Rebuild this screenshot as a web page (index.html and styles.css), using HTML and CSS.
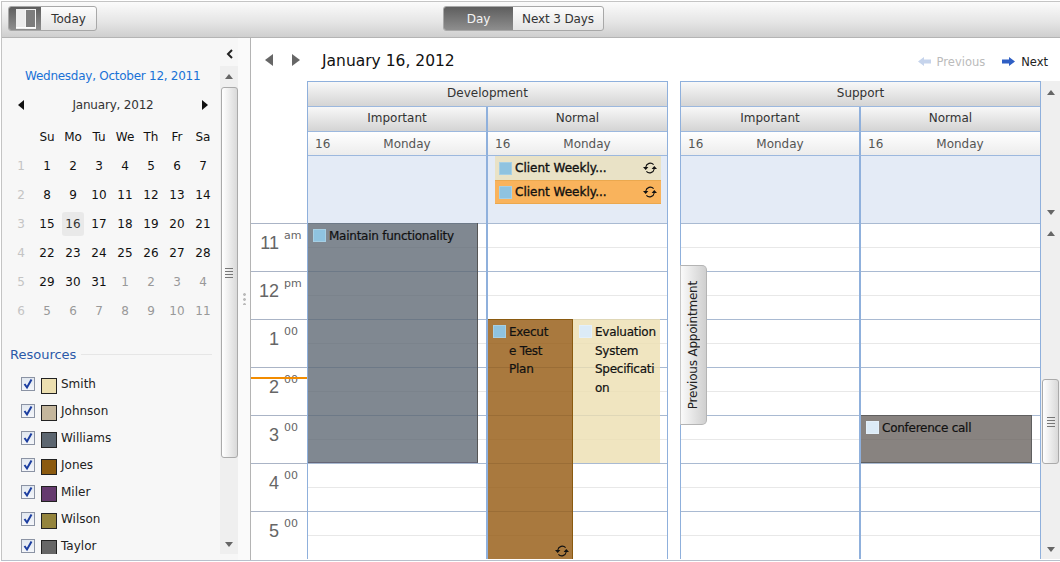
FILE: index.html
```html
<!DOCTYPE html>
<html lang="en">
<head>
<meta charset="utf-8">
<title>Scheduler</title>
<link rel="stylesheet" href="styles.css">
</head>
<body>
<div class="app">
  <header class="toolbar">
    <div class="btn-group">
      <button class="seg seg-active seg-icon" aria-label="Toggle sidebar">
        <svg width="20" height="20" viewBox="0 0 20 20"><rect x="0" y="0" width="10" height="20" fill="#ececec"/><rect x="9.500" y=".5" width="10" height="19" fill="#7d7d7d" stroke="#f4f4f4"/><rect x="0" y="18" width="20" height="1" fill="#fff"/></svg>
      </button>
      <button class="seg seg-today">Today</button>
    </div>
    <div class="btn-group views">
      <button class="seg seg-active seg-day">Day</button>
      <button class="seg seg-next3">Next 3 Days</button>
    </div>
  </header>

  <div class="workspace">
    <aside class="sidebar">
      <div class="side-content">
        <div class="today-link">Wednesday, October 12, 2011</div>
        <div class="month-row">
          <svg class="mini-arrow" width="8" height="12" viewBox="0 0 8 12"><path d="M7 1v10L1 6z" fill="#111"/></svg>
          <span>January, 2012</span>
          <svg class="mini-arrow" width="8" height="12" viewBox="0 0 8 12"><path d="M1 1v10l6-5z" fill="#111"/></svg>
        </div>
        <div class="cal-grid">
          <span></span><span>Su</span><span>Mo</span><span>Tu</span><span>We</span><span>Th</span><span>Fr</span><span>Sa</span>
          <span class="wk">1</span><span>1</span><span>2</span><span>3</span><span>4</span><span>5</span><span>6</span><span>7</span>
          <span class="wk">2</span><span>8</span><span>9</span><span>10</span><span>11</span><span>12</span><span>13</span><span>14</span>
          <span class="wk">3</span><span>15</span><span class="sel">16</span><span>17</span><span>18</span><span>19</span><span>20</span><span>21</span>
          <span class="wk">4</span><span>22</span><span>23</span><span>24</span><span>25</span><span>26</span><span>27</span><span>28</span>
          <span class="wk">5</span><span>29</span><span>30</span><span>31</span><span class="off">1</span><span class="off">2</span><span class="off">3</span><span class="off">4</span>
          <span class="wk">6</span><span class="off">5</span><span class="off">6</span><span class="off">7</span><span class="off">8</span><span class="off">9</span><span class="off">10</span><span class="off">11</span>
        </div>
        <div class="res-title"><span>Resources</span><i></i></div>
        <ul class="res-list">
          <li><span class="check"><svg width="12" height="12" viewBox="0 0 12 12"><use href="#tickmark"/></svg></span><span class="swatch c-smith"></span>Smith</li>
          <li><span class="check"><svg width="12" height="12" viewBox="0 0 12 12"><use href="#tickmark"/></svg></span><span class="swatch c-johnson"></span>Johnson</li>
          <li><span class="check"><svg width="12" height="12" viewBox="0 0 12 12"><use href="#tickmark"/></svg></span><span class="swatch c-williams"></span>Williams</li>
          <li><span class="check"><svg width="12" height="12" viewBox="0 0 12 12"><use href="#tickmark"/></svg></span><span class="swatch c-jones"></span>Jones</li>
          <li><span class="check"><svg width="12" height="12" viewBox="0 0 12 12"><use href="#tickmark"/></svg></span><span class="swatch c-miler"></span>Miler</li>
          <li><span class="check"><svg width="12" height="12" viewBox="0 0 12 12"><use href="#tickmark"/></svg></span><span class="swatch c-wilson"></span>Wilson</li>
          <li><span class="check"><svg width="12" height="12" viewBox="0 0 12 12"><use href="#tickmark"/></svg></span><span class="swatch c-taylor"></span>Taylor</li>
        </ul>
      </div>
      <div class="side-rail">
        <div class="collapse"><svg width="8" height="10" viewBox="0 0 8 10"><path d="M6 1L2 5l4 4" fill="none" stroke="#222" stroke-width="2"/></svg></div>
        <div class="scroll side-scroll">
          <span class="up"></span>
          <div class="thumb side-thumb"><span class="grip"></span></div>
          <span class="down"></span>
        </div>
      </div>
      <div class="side-splitter"><span class="dots"></span></div>
    </aside>

    <main class="main">
      <div class="nav">
        <svg class="nav-arrow" width="10" height="12" viewBox="0 0 10 12"><path d="M9 0v12L1 6z" fill="#666"/></svg>
        <svg class="nav-arrow" width="10" height="12" viewBox="0 0 10 12"><path d="M1 0v12l8-6z" fill="#666"/></svg>
        <h1 class="nav-title">January 16, 2012</h1>
        <span class="nav-link disabled"><svg width="13" height="9" viewBox="0 0 13 9"><path d="M6 0v2.500h7v4H6V9L0 4.500z" fill="#c6d4ec"/></svg>Previous</span>
        <span class="nav-link"><svg width="13" height="9" viewBox="0 0 13 9"><path d="M7 0v2.500H0v4h7V9l6-4.500z" fill="#2f5fc4"/></svg>Next</span>
      </div>

      <div class="sched-head">
        <div class="gutter"></div>
        <section class="group">
          <div class="group-title">Development</div>
          <div class="cols">
            <div class="col-head">Important</div>
            <div class="col-head">Normal</div>
          </div>
          <div class="cols">
            <div class="day-head"><span>16</span><span>Monday</span></div>
            <div class="day-head"><span>16</span><span>Monday</span></div>
          </div>
          <div class="cols all-day">
            <div class="all-cell"></div>
            <div class="all-cell">
              <div class="all-ev ev-tan"><span class="tick"></span><b>Client Weekly...</b><svg class="rec" width="14" height="14" viewBox="0 0 14 14"><use href="#recur"/></svg></div>
              <div class="all-ev ev-orange"><span class="tick"></span><b>Client Weekly...</b><svg class="rec" width="14" height="14" viewBox="0 0 14 14"><use href="#recur"/></svg></div>
            </div>
          </div>
        </section>
        <div class="group-gap"></div>
        <section class="group">
          <div class="group-title">Support</div>
          <div class="cols">
            <div class="col-head">Important</div>
            <div class="col-head">Normal</div>
          </div>
          <div class="cols">
            <div class="day-head"><span>16</span><span>Monday</span></div>
            <div class="day-head"><span>16</span><span>Monday</span></div>
          </div>
          <div class="cols all-day">
            <div class="all-cell"></div>
            <div class="all-cell"></div>
          </div>
        </section>
        <div class="scroll head-scroll"><span class="up"></span><span class="down"></span></div>
      </div>

      <div class="sched-body">
        <div class="gutter times">
          <div class="time"><b>11</b><sup>am</sup></div>
          <div class="time"><b>12</b><sup>pm</sup></div>
          <div class="time"><b>1</b><sup>00</sup></div>
          <div class="time"><b>2</b><sup>00</sup></div>
          <div class="time"><b>3</b><sup>00</sup></div>
          <div class="time"><b>4</b><sup>00</sup></div>
          <div class="time"><b>5</b><sup>00</sup></div>
          <div class="now-line"></div>
        </div>
        <section class="group group-body">
          <div class="cols cols-body">
            <div class="day-col">
              <div class="ev ev-maintain"><span class="tick"></span><span class="ev-text">Maintain functionality</span></div>
            </div>
            <div class="day-col">
              <div class="ev ev-execute"><span class="tick"></span><span class="ev-text ev-wrap-a">Execute Test Plan</span>
                <svg class="rec rec-bottom" width="14" height="14" viewBox="0 0 14 14"><use href="#recur"/></svg>
              </div>
              <div class="ev ev-eval"><span class="tick tick-light"></span><span class="ev-text ev-wrap-b">Evaluation System Specification</span></div>
            </div>
          </div>
        </section>
        <div class="group-gap"></div>
        <section class="group group-body">
          <div class="cols cols-body">
            <div class="day-col">
              <div class="prev-tab"><span>Previous Appointment</span></div>
            </div>
            <div class="day-col">
              <div class="ev ev-conf"><span class="tick tick-light"></span><span class="ev-text">Conference call</span></div>
            </div>
          </div>
        </section>
        <div class="scroll body-scroll">
          <span class="up"></span>
          <div class="thumb body-thumb"><span class="grip"></span></div>
          <span class="down"></span>
        </div>
      </div>
    </main>
  </div>
</div>
<svg class="defs" width="0" height="0" aria-hidden="true">
  <symbol id="recur" viewBox="0 0 14 14">
    <path d="M2.800 6a4.500 4.500 0 0 1 7.800-2.300M11.200 8a4.500 4.500 0 0 1-7.800 2.300" fill="none" stroke="#111" stroke-width="1.100"/>
    <path d="M0 6h5.400L2.700 9zM8.600 8h5.400L11.300 5z" fill="#111"/>
  </symbol>
  <symbol id="tickmark" viewBox="0 0 12 12">
    <path d="M2.500 6l2.500 3.500L9.500 1.500" fill="none" stroke="#1c3ea0" stroke-width="2"/>
  </symbol>
</svg>
</body>
</html>
```
FILE: styles.css
```css
* { box-sizing: border-box; }
html, body { margin: 0; height: 100%; overflow: hidden; background: #fff; }
body { font-family: "DejaVu Sans", sans-serif; font-size: 12px; color: #333; }
.defs { position: absolute; }

.app {
  margin: 1px 0 0 1px;
  height: 560px;
  border-top: 1px solid #c4c4c4;
  border-left: 1px solid #c4c4c4;
  border-bottom: 1px solid #b8c0cc;
  display: flex;
  flex-direction: column;
}

/* toolbar */
.toolbar {
  height: 36px;
  flex: none;
  display: flex;
  align-items: center;
  padding: 0 0 2px 6px;
  border-bottom: 1px solid #b4b4b4;
  background: linear-gradient(#fbfbfb, #e6e6e6 55%, #cfcfcf);
}
.btn-group {
  display: flex;
  height: 25px;
  border: 1px solid #a8a8a8;
  border-radius: 3px;
  overflow: hidden;
  background: linear-gradient(#fdfdfd, #e4e4e4);
}
.views { margin-left: 346px; }
.seg {
  font: 12px "DejaVu Sans", sans-serif;
  color: #333;
  border: 0;
  padding: 0;
  background: none;
  display: flex;
  align-items: center;
  justify-content: center;
}
.seg-active { background: linear-gradient(#5e5e5e, #8e8e8e); color: #f4f4f4; }
.seg-icon { width: 32px; padding-left: 2px; }
.seg-today { width: 55px; }
.seg-day { width: 69px; }
.seg-next3 { width: 90px; letter-spacing: -.12px; }

.workspace { flex: 1; display: flex; min-height: 0; }

/* sidebar */
.sidebar {
  width: 249px;
  flex: none;
  display: flex;
  padding-bottom: 6px;
  background: #f7f7f7;
  border-right: 1px solid #b4b4b4;
}
.side-content { width: 218px; flex: none; overflow: hidden; padding-top: 30px; }
.today-link { padding-left: 23px; line-height: 16px; color: #1a72d6; letter-spacing: -.26px; white-space: nowrap; }
.month-row {
  margin: 13px 0 0 15px;
  width: 192px;
  height: 16px;
  display: flex;
  justify-content: space-between;
  align-items: center;
  color: #333;
  letter-spacing: -.2px;
}
.cal-grid {
  margin: 9.500px 0 0 6px;
  display: grid;
  grid-template-columns: repeat(8, 26px);
  grid-auto-rows: 29px;
  color: #111;
}
.cal-grid span { display: flex; align-items: center; justify-content: center; }
.cal-grid .wk { color: #c4c4c4; }
.cal-grid .off { color: #999; }
.cal-grid .sel { background: #e9e9e9; border-radius: 3px; margin: 2px 2px 3px 2px; color: #333; }

.res-title {
  margin: 20px 0 0 8px;
  width: 202px;
  height: 18px;
  display: flex;
  align-items: center;
  gap: 5px;
  font-size: 13px;
  color: #2b59a8;
}
.res-title i { flex: 1; height: 1px; background: #e6e6e6; }
.res-list { list-style: none; margin: 7px 0 0; padding: 0 0 0 19px; color: #222; }
.res-list li { height: 27px; display: flex; align-items: center; }
.check {
  width: 14px;
  height: 14px;
  margin: -1px 6px 0 0;
  border: 1px solid #8b93a4;
  background: linear-gradient(#e2e8f0, #f4f6fa);
  display: flex;
}
.swatch { width: 16px; height: 16px; margin: 4px 4px 0 0; border: 1px solid #222; }
.c-smith { background: #ecdfb0; }
.c-johnson { background: #c4b69c; }
.c-williams { background: #5c6670; }
.c-jones { background: #8b5a10; }
.c-miler { background: #653a6e; }
.c-wilson { background: #94843c; }
.c-taylor { background: #666; }

.side-rail { width: 18px; flex: none; display: flex; flex-direction: column; }
.collapse { height: 28px; flex: none; display: flex; align-items: center; justify-content: center; padding: 4px 0 0 1px; }
.side-splitter { flex: 1; margin-bottom: -6px; background: #fafafa; display: flex; align-items: center; justify-content: center; }
.dots { width: 3px; height: 12px; background: radial-gradient(circle at 1.500px 1.500px, #bbb 1.300px, transparent 1.500px) 0 0 / 3px 5px; }

/* scrollbars */
.scroll { background: #efefef; display: flex; flex-direction: column; align-items: center; }
.side-scroll { flex: 1; min-height: 0; }
.up, .down { flex: none; width: 100%; height: 20px; position: relative; }
.up::after, .down::after {
  content: "";
  position: absolute;
  left: 50%;
  top: 8px;
  margin-left: -4px;
  border: 4px solid transparent;
  border-top: 0;
  border-bottom: 5px solid #666;
}
.down { margin-top: auto; }
.down::after { border-bottom: 0; border-top: 5px solid #666; }
.thumb {
  width: 17px;
  flex: none;
  border: 1px solid #aaa;
  border-radius: 3px;
  background: linear-gradient(90deg, #fff, #d9d9d9);
  display: flex;
  align-items: center;
  justify-content: center;
}
.side-thumb { height: 371px; margin-top: 1px; }
.grip { width: 8px; height: 10px; background: repeating-linear-gradient(#777 0 1px, transparent 1px 3px); }

/* main */
.main { flex: 1; min-width: 0; display: flex; flex-direction: column; }
.nav { height: 43px; flex: none; display: flex; align-items: center; padding: 1px 12px 0 13px; color: #111; }
.nav-arrow { margin-right: 17px; }
.nav-title { margin: 2px auto 0 4px; font-size: 15.500px; font-weight: 400; color: #111; }
.nav-link { display: flex; align-items: center; gap: 6px; margin-left: 17px; color: #222; padding-top: 3px; font-size: 11.500px; }
.nav-link.disabled { color: #bbb; }

.sched-head, .sched-body { display: flex; flex: none; }
.gutter { width: 56px; flex: none; }
.group { width: 361px; flex: none; border: solid #8fb0dc; border-width: 1px 1px 0; }
.group-gap { width: 12px; flex: none; }
.group-title, .col-head {
  height: 25px;
  display: flex;
  align-items: center;
  justify-content: center;
  padding-bottom: 2px;
  border-bottom: 1px solid #9cb8de;
  color: #333;
  background: linear-gradient(#f8f8f8, #d4d4d4);
}
.cols { display: grid; grid-template-columns: 180px 179px; }
.col-head:first-child, .day-head:first-child, .all-cell:first-child, .day-col:first-child { border-right: 2px solid #8fb0dc; }
.day-head {
  height: 24px;
  display: flex;
  align-items: center;
  padding-left: 7px;
  border-bottom: 1px solid #9cb8de;
  color: #555;
  background: linear-gradient(#fff, #ececec);
}
.day-head span:last-child { margin-left: 53px; }
.all-day { height: 67px; }
.all-cell { background: #e4ebf6; padding: 0 6px 0 7px; }
.all-ev { height: 24px; display: flex; align-items: center; padding: 0 4px; gap: 3px; color: #111; }
.all-ev b { font-weight: 400; -webkit-text-stroke: .35px #111; flex: 1; }
.ev-tan { background: #e9e2c6; }
.ev-orange { background: #f9b35c; border-top: 1px solid #eba84e; border-bottom: 1px solid #eba84e; }
.tick { width: 13px; height: 13px; flex: none; background: #8fc3e0; border: 1px solid #a6cfe4; }
.tick-light { background: #dcebf7; border-color: #e4f0fa; }
.rec { flex: none; }

.head-scroll { width: 19px; flex: none; }
.head-scroll .down { margin-bottom: 1px; }
.head-scroll .up { margin-top: 1px; }

.sched-body { height: 336px; overflow: hidden; }
.times { position: relative; }
.time {
  height: 48px;
  display: grid;
  grid-template-columns: 28px auto;
  column-gap: 5px;
  align-items: start;
  border-top: 1px solid #aab4c6;
  color: #666;
}
.time b { font: 400 18px/24px "Liberation Sans", sans-serif; text-align: right; padding-top: 7px; }
.time sup { font-size: 11px; line-height: 13px; padding-top: 5px; vertical-align: baseline; }
.now-line { position: absolute; left: 0; right: 0; top: 154px; height: 2px; background: #f28c00; }

.group-body { border-top: 0; }
.cols-body { height: 336px; }
.day-col {
  position: relative;
  height: 336px;
  background:
    linear-gradient(#a9bad2 1px, transparent 1px) 0 0 / 100% 48px,
    linear-gradient(transparent 24px, #e8e8e8 24px, #e8e8e8 25px, transparent 25px) 0 0 / 100% 48px,
    #fff;
}
.ev { position: absolute; display: flex; align-items: flex-start; gap: 3px; color: #111; padding: 5px 0 0 5px; line-height: 18.700px; }
.ev .tick { margin-top: 1px; }
.ev-text { -webkit-text-stroke: .2px #111; margin-top: -1px; letter-spacing: -.25px; }
.ev-maintain { left: 0; top: 0; width: 170px; height: 240px; background: rgba(92,102,114,.78); border-right: 1px solid #555; border-bottom: 1px solid #667; }
.ev-execute { left: 0; top: 96px; width: 85px; height: 240px; background: rgba(150,92,20,.82); border-right: 1px solid #8a5a10; border-top: 1px solid #8a5a10; padding-top: 4px; }
.ev-eval { left: 85px; top: 96px; width: 87px; height: 144px; background: rgba(236,223,176,.8); padding-left: 6px; }
.ev-conf { left: 0; top: 192px; width: 171px; height: 48px; background: rgba(102,96,92,.78); border: solid #5f5f5f; border-width: 1px 1px 1px 0; padding-top: 4px; }
.ev-wrap-a { width: 46px; overflow-wrap: anywhere; }
.ev-wrap-b { width: 62px; overflow-wrap: anywhere; }
.rec-bottom { position: absolute; right: 3px; bottom: 1px; }

.prev-tab {
  position: absolute;
  left: -1px;
  top: 42px;
  width: 27px;
  height: 160px;
  padding-right: 1px;
  border: 1px solid #b4b4b4;
  border-left-color: #c8c8c8;
  border-radius: 0 5px 5px 0;
  background: linear-gradient(90deg, #fafafa, #cfcfcf);
  display: flex;
  align-items: center;
  justify-content: center;
  color: #222;
  letter-spacing: -.2px;
}
.prev-tab span { writing-mode: vertical-rl; transform: rotate(180deg); white-space: nowrap; }

.body-scroll { width: 19px; flex: none; }
.body-thumb { height: 85px; margin-top: 136px; }
```
